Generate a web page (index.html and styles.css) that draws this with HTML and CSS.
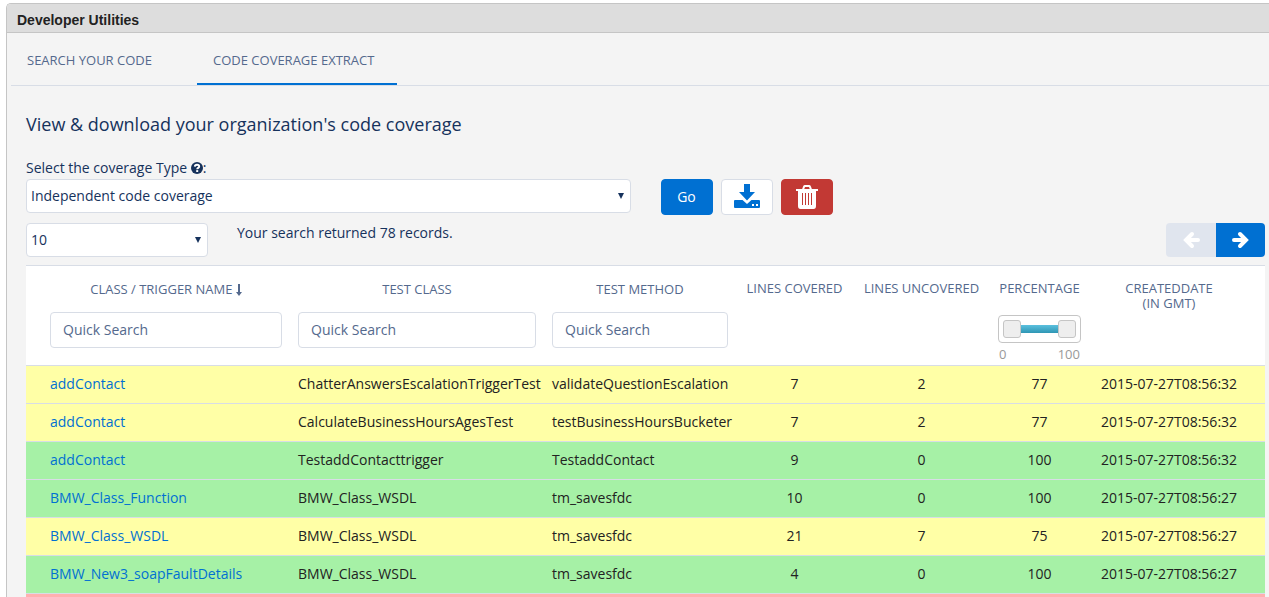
FILE: index.html
```html
<!DOCTYPE html>
<html lang="en">
<head>
    <meta charset="UTF-8">
    <meta name="viewport" content="width=device-width, initial-scale=1.0">
    <title>Developer Utilities</title>
    <link rel="stylesheet" href="styles.css">
</head>
<body>
    <div class="panel">
        <h1 class="panel-title">Developer Utilities</h1>

        <nav class="tabs">
            <a href="#search" class="tab">Search your code</a>
            <a href="#coverage" class="tab active">Code coverage extract</a>
        </nav>

        <main class="content">
            <h2>View &amp; download your organization's code coverage</h2>

            <label for="coverageType" class="type-label">Select the coverage Type
                <svg class="help-icon" viewBox="0 0 12 12" aria-hidden="true">
                    <circle cx="6" cy="6" r="6" fill="#16325c"/>
                    <path d="M3.800 4.600C4 2 8.200 2.200 8.200 4.500C8.200 5.900 6.200 5.900 6.200 7.300" fill="none" stroke="#fff" stroke-width="1.900"/>
                    <rect x="5.200" y="8.100" width="2" height="1.900" fill="#fff"/>
                </svg>:</label>

            <div class="toolbar">
                <div class="select-wrap wide">
                    <select id="coverageType">
                        <option>Independent code coverage</option>
                    </select>
                </div>
                <div class="actions">
                    <button type="button" class="btn btn-brand">Go</button>
                    <button type="button" class="btn btn-neutral" aria-label="Download">
                        <svg width="26" height="26" viewBox="0 0 26 26">
                            <path d="M10 0h6v8h5l-8 8.500L5 8h5z" fill="#0070d2"/>
                            <path d="M1 16h7.500l4.500 4 4.500-4H25q1 0 1 1v6q0 1-1 1H1q-1 0-1-1v-6q0-1 1-1zM18 20v2h2v-2zM22 20v2h2v-2z" fill="#0070d2" fill-rule="evenodd"/>
                        </svg>
                    </button>
                    <button type="button" class="btn btn-danger" aria-label="Delete">
                        <svg width="22" height="24" viewBox="0 0 22 24">
                            <path d="M7 4.500L8 1.800Q8.300 1 9 1h4q.7 0 1 .8l1 2.700" fill="none" stroke="#fff" stroke-width="2"/>
                            <path d="M0 4h22v2h-2v15q0 3-2.500 3h-13Q2 24 2 21V6H0z" fill="#fff"/>
                            <path d="M6.500 8v12M9.500 8v12M12.500 8v12M15.500 8v12" stroke="#c23934" stroke-width="1"/>
                        </svg>
                    </button>
                </div>
            </div>

            <div class="result-bar">
                <div class="select-wrap narrow">
                    <select id="pageSize" aria-label="Records per page">
                        <option>10</option>
                    </select>
                </div>
                <p class="result-text">Your search returned 78 records.</p>
                <div class="pager">
                    <button type="button" class="prev" disabled aria-label="Previous">
                        <svg width="17" height="18" viewBox="0 0 17 18">
                            <path d="M9 3L3 9L9 15M4 9H15" fill="none" stroke="#fff" stroke-width="4" stroke-linecap="round"/>
                        </svg>
                    </button>
                    <button type="button" class="next" aria-label="Next">
                        <svg width="17" height="18" viewBox="0 0 17 18">
                            <path d="M8 3L14 9L8 15M13 9H2" fill="none" stroke="#fff" stroke-width="4" stroke-linecap="round"/>
                        </svg>
                    </button>
                </div>
            </div>

            <table class="coverage">
                <colgroup>
                    <col class="col-name">
                    <col class="col-class">
                    <col class="col-method">
                    <col class="col-covered">
                    <col class="col-uncovered">
                    <col class="col-percent">
                    <col class="col-date">
                </colgroup>
                <thead>
                    <tr>
                        <th>
                            <label for="nameFilter">Class / Trigger Name
                                <svg width="6" height="12" viewBox="0 0 6 12" aria-hidden="true">
                                    <path d="M2 0h2v8h2L3 12 0 8h2z" fill="#54698d"/>
                                </svg></label>
                            <input type="text" id="nameFilter" placeholder="Quick Search">
                        </th>
                        <th>
                            <label for="classFilter">Test Class</label>
                            <input type="text" id="classFilter" placeholder="Quick Search">
                        </th>
                        <th>
                            <label for="methodFilter">Test Method</label>
                            <input type="text" id="methodFilter" placeholder="Quick Search">
                        </th>
                        <th>Lines Covered</th>
                        <th>Lines Uncovered</th>
                        <th>
                            Percentage
                            <div class="slider">
                                <div class="slider-track"></div>
                                <input type="range" min="0" max="100" value="0" aria-label="Minimum percentage">
                                <input type="range" min="0" max="100" value="100" aria-label="Maximum percentage">
                            </div>
                            <div class="slider-values"><span>0</span><span>100</span></div>
                        </th>
                        <th>CreatedDate<br>(in GMT)</th>
                    </tr>
                </thead>
                <tbody>
                    <tr class="medium">
                        <td><a href="#">addContact</a></td>
                        <td>ChatterAnswersEscalationTriggerTest</td>
                        <td>validateQuestionEscalation</td>
                        <td>7</td>
                        <td>2</td>
                        <td>77</td>
                        <td>2015-07-27T08:56:32</td>
                    </tr>
                    <tr class="medium">
                        <td><a href="#">addContact</a></td>
                        <td>CalculateBusinessHoursAgesTest</td>
                        <td>testBusinessHoursBucketer</td>
                        <td>7</td>
                        <td>2</td>
                        <td>77</td>
                        <td>2015-07-27T08:56:32</td>
                    </tr>
                    <tr class="high">
                        <td><a href="#">addContact</a></td>
                        <td>TestaddContacttrigger</td>
                        <td>TestaddContact</td>
                        <td>9</td>
                        <td>0</td>
                        <td>100</td>
                        <td>2015-07-27T08:56:32</td>
                    </tr>
                    <tr class="high">
                        <td><a href="#">BMW_Class_Function</a></td>
                        <td>BMW_Class_WSDL</td>
                        <td>tm_savesfdc</td>
                        <td>10</td>
                        <td>0</td>
                        <td>100</td>
                        <td>2015-07-27T08:56:27</td>
                    </tr>
                    <tr class="medium">
                        <td><a href="#">BMW_Class_WSDL</a></td>
                        <td>BMW_Class_WSDL</td>
                        <td>tm_savesfdc</td>
                        <td>21</td>
                        <td>7</td>
                        <td>75</td>
                        <td>2015-07-27T08:56:27</td>
                    </tr>
                    <tr class="high">
                        <td><a href="#">BMW_New3_soapFaultDetails</a></td>
                        <td>BMW_Class_WSDL</td>
                        <td>tm_savesfdc</td>
                        <td>4</td>
                        <td>0</td>
                        <td>100</td>
                        <td>2015-07-27T08:56:27</td>
                    </tr>
                    <tr class="low">
                        <td colspan="7"></td>
                    </tr>
                </tbody>
            </table>
        </main>
    </div>
</body>
</html>
```
FILE: styles.css
```css
* {
    box-sizing: border-box;
}

body {
    margin: 0;
    padding: 3px 0 0 6px;
    height: 100vh;
    overflow: hidden;
    background-color: #fff;
    color: #16325c;
    font-family: "Open Sans", "Noto Sans", sans-serif;
    font-size: 14px;
    line-height: 20px;
}

h1, h2, p {
    margin: 0;
    font-weight: normal;
}

a {
    color: #0070d2;
    text-decoration: none;
}

svg {
    display: block;
}

.panel {
    border: 1px solid #c5c5c5;
    border-right: none;
    border-radius: 5px 0 0 0;
    background-color: #f4f4f4;
}

.panel-title {
    padding: 6px 10px 2px;
    border-bottom: 1px solid #c5c5c5;
    border-radius: 4px 0 0 0;
    background-color: #ddd;
    color: #222;
    font-family: "Liberation Sans", Arial, sans-serif;
    font-size: 14px;
    font-weight: bold;
}

/* Tabs */
.tabs {
    display: flex;
    gap: 26px;
    margin-left: 4px;
    border-bottom: 1px solid #d8dde6;
}

.tab {
    min-width: 160px;
    padding: 17px 16px 13px;
    border-bottom: 2px solid transparent;
    color: #54698d;
    font-size: 13px;
    text-transform: uppercase;
}

.tab.active {
    min-width: 200px;
    border-bottom-color: #0070d2;
}

.content {
    padding: 26px 4px 0 19px;
}

h2 {
    font-size: 18px;
    line-height: 24px;
}

.type-label {
    display: block;
    margin: 22px 0 1px;
}

.help-icon {
    display: inline-block;
    width: 12px;
    height: 12px;
    vertical-align: -1px;
}

/* Coverage type, buttons */
.toolbar {
    display: flex;
    gap: 30px;
}

.select-wrap {
    position: relative;
    height: 34px;
}

.select-wrap.wide {
    width: calc(50% - 15px);
}

.select-wrap.narrow {
    width: 182px;
}

.select-wrap::after {
    content: "";
    position: absolute;
    top: 14px;
    right: 7px;
    border: 3px solid transparent;
    border-top: 6px solid #16325c;
    border-bottom: none;
    pointer-events: none;
}

select {
    width: 100%;
    height: 34px;
    padding: 0 4px;
    border: 1px solid #d8dde6;
    border-radius: 4px;
    background-color: #fff;
    color: #16325c;
    font: inherit;
    appearance: none;
}

.actions {
    display: flex;
    gap: 8px;
}

.btn {
    display: flex;
    justify-content: center;
    align-items: center;
    width: 52px;
    height: 36px;
    padding: 0;
    border: 1px solid #d8dde6;
    border-radius: 4px;
    font: inherit;
    cursor: pointer;
}

.btn-brand {
    border-color: #0070d2;
    background-color: #0070d2;
    color: #fff;
}

.btn-neutral {
    background-color: #fff;
}

.btn-danger {
    border-color: #c23934;
    background-color: #c23934;
}

/* Page size, result count, pager */
.result-bar {
    display: flex;
    margin: 8px 0;
}

.result-text {
    margin-left: 29px;
}

.pager {
    display: flex;
    margin-left: auto;
}

.pager button {
    display: flex;
    justify-content: center;
    align-items: center;
    width: 50px;
    height: 34px;
    padding: 0;
    border: none;
}

.pager .prev {
    border-radius: 4px 0 0 4px;
    background-color: #e0e5ee;
}

.pager .next {
    width: 49px;
    border-radius: 0 4px 4px 0;
    background-color: #0070d2;
    cursor: pointer;
}

/* Coverage table */
.coverage {
    width: 100%;
    border-collapse: separate;
    border-spacing: 0;
    table-layout: fixed;
    background-color: #fff;
}

.col-name { width: 264px; }
.col-class { width: 254px; }
.col-method { width: 192px; }
.col-covered { width: 117px; }
.col-uncovered { width: 137px; }
.col-percent { width: 99px; }
.col-date { width: 176px; }

.coverage th {
    height: 100px;
    padding: 15px 8px 0;
    border-top: 1px solid #d8dde6;
    color: #54698d;
    font-size: 13px;
    font-weight: normal;
    line-height: 15px;
    text-align: center;
    text-transform: uppercase;
    vertical-align: top;
    white-space: nowrap;
}

.coverage th label {
    display: block;
    line-height: 16px;
}

.coverage th label svg {
    display: inline-block;
    vertical-align: -2px;
}

.coverage th input[type="text"] {
    display: block;
    width: 100%;
    height: 36px;
    margin-top: 15px;
    padding: 0 12px 2px;
    border: 1px solid #d8dde6;
    border-radius: 4px;
    font-family: inherit;
    font-size: 14px;
}

.coverage th input::placeholder {
    color: #54698d;
}

.coverage td {
    height: 38px;
    padding: 0 8px 2px;
    border-top: 1px solid #d8dde6;
    color: #222;
    text-align: center;
    white-space: nowrap;
}

.coverage td:nth-child(-n+3) {
    text-align: left;
}

.coverage th:first-child,
.coverage td:first-child {
    padding-left: 24px;
}

.coverage th:last-child,
.coverage td:last-child {
    padding-right: 24px;
}

.medium { background-color: #ffffa6; }
.high { background-color: #a6f1a6; }
.low { background-color: #ffb0b0; }

/* Percentage range */
.slider {
    position: relative;
    height: 28px;
    margin-top: 19px;
    padding: 9px 22px;
    border: 1px solid #c5c5c5;
    border-radius: 4px;
}

.slider-track {
    height: 8px;
    background: linear-gradient(#5bc0de, #2f96b4);
}

.slider input {
    position: absolute;
    top: 4px;
    left: 4px;
    width: calc(100% - 8px);
    height: 18px;
    margin: 0;
    background: none;
    appearance: none;
    pointer-events: none;
}

.slider input::-webkit-slider-thumb {
    width: 18px;
    height: 18px;
    border: 1px solid #c5c5c5;
    border-radius: 3px;
    background-color: #eee;
    appearance: none;
    pointer-events: auto;
}

.slider-values {
    display: flex;
    justify-content: space-between;
    margin-top: 4px;
    padding: 0 1px;
    color: #999;
}
```
